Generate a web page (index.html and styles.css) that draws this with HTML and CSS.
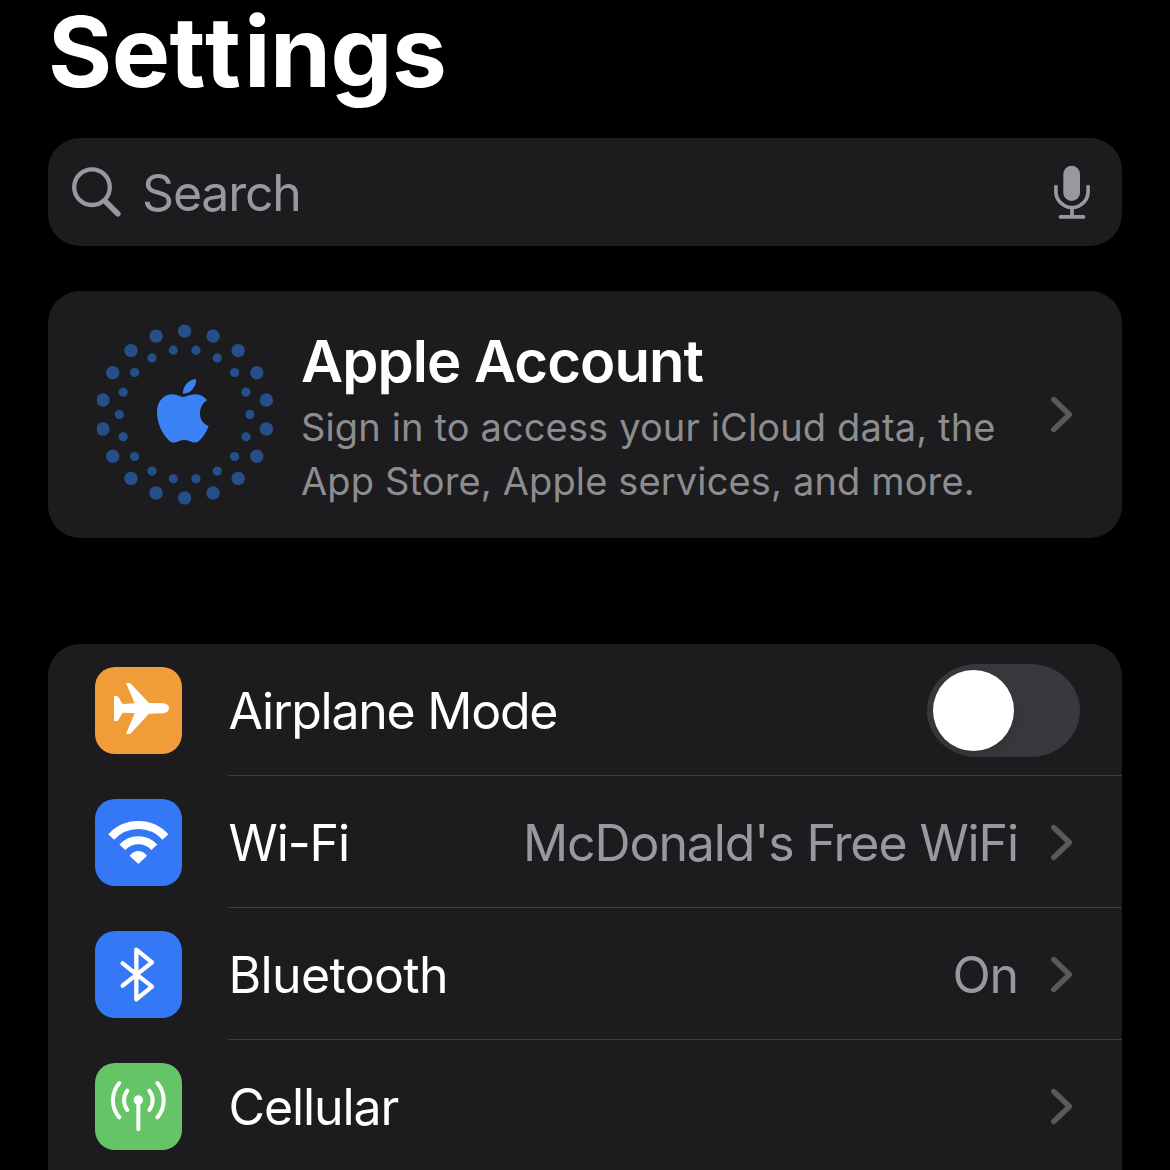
FILE: index.html
```html
<!DOCTYPE html>
<html lang="en">
<head>
<meta charset="utf-8">
<title>Settings</title>
<link rel="stylesheet" href="styles.css">
</head>
<body>
<main class="screen">
  <h1 class="title">Se<span class="title-tt">tt</span>ings</h1>

  <div class="search">
    <svg class="search-icon" viewBox="0 0 50 50"><circle cx="21" cy="20.2" r="17.8" stroke-width="4.3"/><path d="M34 34 46.8 46.8" stroke-width="5.6"/></svg>
    <span class="search-label">Search</span>
    <svg class="mic-icon" viewBox="0 0 38 55"><rect x="10.3" y=".7" width="16.7" height="35.3" rx="8.3"/><path d="M2.9 21.7v4.7a16.1 16.1 0 0 0 32.2 0v-4.7M19 42.5V52M7.5 51.9h23"/></svg>
  </div>

  <section class="card account">
    <svg class="account-logo" viewBox="0 0 178 182">
      <g class="dots">
        <circle cx="87.6" cy="7.1" r="6.7"/><circle cx="116.1" cy="12.1" r="6.7"/><circle cx="141.2" cy="26.6" r="6.7"/><circle cx="159.8" cy="48.8" r="6.7"/><circle cx="169.4" cy="76" r="6.7"/><circle cx="169.4" cy="105" r="6.7"/><circle cx="159.8" cy="132.2" r="6.7"/><circle cx="141.2" cy="154.4" r="6.7"/><circle cx="116.1" cy="168.9" r="6.7"/><circle cx="87.6" cy="173.9" r="6.7"/><circle cx="59.1" cy="168.9" r="6.7"/><circle cx="34" cy="154.4" r="6.7"/><circle cx="15.7" cy="132.2" r="6.7"/><circle cx="6" cy="105" r="6.7"/><circle cx="6" cy="76" r="6.7"/><circle cx="15.7" cy="48.8" r="6.7"/><circle cx="34" cy="26.6" r="6.7"/><circle cx="59.1" cy="12.1" r="6.7"/>
        <circle cx="98.9" cy="26.2" r="4.6"/><circle cx="120.2" cy="33.9" r="4.6"/><circle cx="137.6" cy="48.5" r="4.6"/><circle cx="149" cy="68.2" r="4.6"/><circle cx="152.9" cy="90.5" r="4.6"/><circle cx="149" cy="112.8" r="4.6"/><circle cx="137.6" cy="132.5" r="4.6"/><circle cx="120.2" cy="147.1" r="4.6"/><circle cx="98.9" cy="154.8" r="4.6"/><circle cx="76.3" cy="154.8" r="4.6"/><circle cx="55" cy="147.1" r="4.6"/><circle cx="37.6" cy="132.5" r="4.6"/><circle cx="26.2" cy="112.8" r="4.6"/><circle cx="22.3" cy="90.5" r="4.6"/><circle cx="26.2" cy="68.2" r="4.6"/><circle cx="37.6" cy="48.5" r="4.6"/><circle cx="55" cy="33.9" r="4.6"/><circle cx="76.3" cy="26.2" r="4.6"/>
      </g>
      <g class="apple" transform="translate(-17 -14) scale(.33333)">
        <path d="M381 271C366 281 360 295 360 311C360 328 370 342 386 348C380 364 370 380 360 390C351 399 342 400 330 394C318 389 307 389 296 394C283 400 275 400 266 391C246 370 231 340 231 307C231 273 252 253 277 253C291 253 301 261 310 261C319 261 331 252 348 253C362 254 373 260 381 271Z"/>
        <path d="M348 207C349 229 334 251 309 251C307 230 325 209 348 207Z"/>
      </g>
    </svg>
    <div class="account-text">
      <h2 class="account-name">Apple Account</h2>
      <p class="account-note">Sign in to access your iCloud data, the<br>App Store, Apple services, and more.</p>
    </div>
    <svg class="chevron" viewBox="0 0 22 37"><path d="M2.7 3.5 18.5 18.5 2.7 33.5"/></svg>
  </section>

  <section class="card list">
    <div class="row">
      <svg class="tile orange" viewBox="0 0 261 261"><path class="solid" d="M57 87H65Q68 87 70 90L83 111L119 109L93 48H102Q106 48 109 52L162 108L206 109Q222 112 222 124Q222 136 206 139L162 140L109 197Q106 201 101 201H93L119 139L83 137L70 159Q68 162 64 162H57Z"/></svg>
      <div class="row-body">
        <span class="label label-airplane">Airplane Mode</span>
        <span class="toggle"><span class="knob"></span></span>
      </div>
    </div>
    <div class="row">
      <svg class="tile blue" viewBox="0 0 261 261"><path d="M48.6 114A109.5 109.5 0 0 1 211.4 114M82 144.5A65.5 65.5 0 0 1 178 144.5" stroke-width="24"/><path class="solid wedge" d="M130 192L106.5 170Q130 146 153.5 170Z"/></svg>
      <div class="row-body">
        <span class="label">Wi-Fi</span>
        <span class="value">McDonald's Free WiFi</span>
        <svg class="chevron" viewBox="0 0 22 37"><path d="M2.7 3.5 18.5 18.5 2.7 33.5"/></svg>
      </div>
    </div>
    <div class="row">
      <svg class="tile blue" viewBox="0 0 261 261"><path class="round" d="M83 97L171 167L124 205V56L171 94L83 164" stroke-width="13"/></svg>
      <div class="row-body">
        <span class="label label-bluetooth">Bluetooth</span>
        <span class="value">On</span>
        <svg class="chevron" viewBox="0 0 22 37"><path d="M2.7 3.5 18.5 18.5 2.7 33.5"/></svg>
      </div>
    </div>
    <div class="row">
      <svg class="tile green" viewBox="0 0 261 261"><circle class="solid" cx="130" cy="111" r="14"/><path class="round" d="M130 111V199M97 83A47 47 0 0 0 97 141M163 83A47 47 0 0 1 163 141M73 60A79 79 0 0 0 73 163M187 60A79 79 0 0 1 187 163" stroke-width="12"/></svg>
      <div class="row-body">
        <span class="label">Cellular</span>
        <svg class="chevron" viewBox="0 0 22 37"><path d="M2.7 3.5 18.5 18.5 2.7 33.5"/></svg>
      </div>
    </div>
  </section>
</main>
</body>
</html>
```
FILE: styles.css
```css
* { box-sizing: border-box; }

body {
  margin: 0;
  background: #000;
  color: #fff;
  font-family: Inter, "Liberation Sans", sans-serif;
}

.screen {
  height: 1170px;
  padding: 0 48px;
  overflow: hidden;
}

.title {
  height: 138px;
  margin: 0;
  font-size: 98px;
  font-weight: 700;
  line-height: 103px;
  letter-spacing: -0.5px;
  white-space: nowrap;
}

.title-tt { letter-spacing: 3px; }

.search {
  display: flex;
  align-items: center;
  height: 108px;
  padding: 0 31px 0 23px;
  border-radius: 32px;
  background: #1c1c1e;
  color: #98989f;
}

.search-icon {
  width: 50px;
  height: 50px;
  fill: none;
  stroke: currentColor;
  stroke-linecap: round;
}

.search-label {
  flex: 1;
  padding: 2px 0 0 21px;
  font-size: 50px;
  letter-spacing: -1.2px;
}

.mic-icon {
  width: 38px;
  height: 55px;
  fill: none;
  stroke: currentColor;
  stroke-width: 3.7;
  stroke-linecap: round;
}

.mic-icon rect { fill: currentColor; stroke: none; }

.card {
  border-radius: 32px;
  background: #1c1c1e;
}

.account {
  display: flex;
  align-items: center;
  height: 247px;
  margin-top: 45px;
  padding: 0 49px;
}

.account-logo {
  flex: none;
  width: 178px;
  height: 182px;
}

.dots { fill: #264f8a; }
.apple { fill: #3b82f7; }

.account-text {
  flex: 1;
  padding-left: 26px;
  white-space: nowrap;
}

.account-name {
  margin: 0;
  font-size: 58px;
  font-weight: 600;
  line-height: 78px;
  letter-spacing: -0.95px;
}

.account-note {
  margin: 0;
  color: #8d8d8f;
  font-size: 38px;
  line-height: 54px;
  letter-spacing: 0.14px;
}

.chevron {
  flex: none;
  width: 22px;
  height: 37px;
  fill: none;
  stroke: #59595c;
  stroke-width: 5.4;
  stroke-linecap: round;
  stroke-linejoin: round;
}

.list {
  height: 560px;
  margin-top: 106px;
}

.row {
  display: flex;
  align-items: center;
  height: 132px;
  padding: 1px 0 0 47px;
}

.tile {
  flex: none;
  width: 87px;
  height: 87px;
  border-radius: 20px;
  fill: none;
  stroke: #fff;
}

.orange { background: #f09c38; }
.blue { background: #3478f6; }
.green { background: #65c466; }

.solid { fill: #fff; stroke: none; }
.wedge { stroke: #fff; stroke-width: 4; stroke-linejoin: round; }
.round { stroke-linecap: round; stroke-linejoin: round; }

.row-body {
  display: flex;
  flex: 1;
  align-items: center;
  height: 131px;
  margin-left: 46px;
  padding: 1px 49px 0 0.5px;
  border-bottom: 1px solid #3d3d40;
  font-size: 50px;
  letter-spacing: -1.1px;
  white-space: nowrap;
}

.label { flex: 1; }
.label-airplane { letter-spacing: -1.25px; }
.label-bluetooth { letter-spacing: -0.65px; }

.value {
  margin-right: 33px;
  color: #98989f;
}

.toggle {
  width: 153px;
  height: 93px;
  margin-right: -7px;
  padding: 6px;
  overflow: hidden;
  border-radius: 50px / 46.5px;
  background: #39393d;
}

.knob {
  display: block;
  width: 81px;
  height: 81px;
  border-radius: 50%;
  background: #fff;
  box-shadow: 0 6px 16px rgba(0, 0, 0, 0.1);
}
```
